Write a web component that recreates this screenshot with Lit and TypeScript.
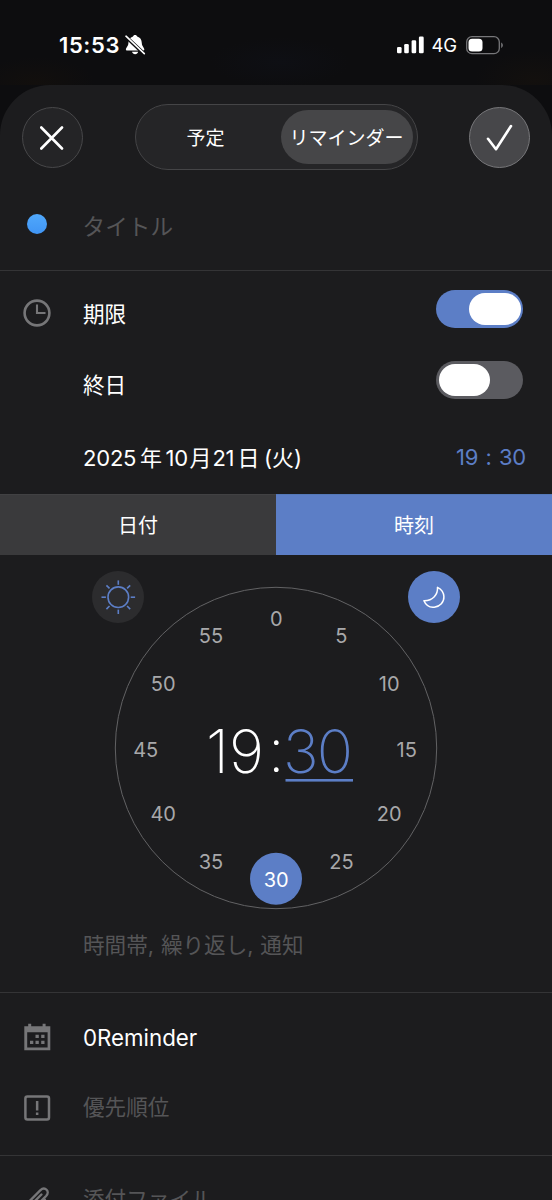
import { LitElement, html, css, svg } from "lit";
import { customElement, property, state } from "lit/decorators.js";
import { classMap } from "lit/directives/class-map.js";

const family = css`Inter, "Noto Sans CJK JP", sans-serif`;

@customElement("toggle-switch")
class ToggleSwitch extends LitElement {
  @property({ type: Boolean }) on = false;
  static styles = css`
    :host { display: block; }
    .track { box-sizing: border-box; width: 86.6px; height: 38.4px; padding: 2.9px 2.5px; border-radius: 19.2px; display: flex; background: #5b5b60; }
    .track.on { background: #5c7ec6; justify-content: flex-end; }
    .knob { width: 51.3px; height: 32.6px; border-radius: 17px; background: #fff; }
  `;
  render() {
    return html`<div class=${classMap({ track: true, on: this.on })} @click=${() => (this.on = !this.on)}><div class="knob"></div></div>`;
  }
}

@customElement("minute-dial")
class MinuteDial extends LitElement {
  @state() minute = 30;
  static styles = css`
    :host { display: block; width: 552px; height: 365px; }
    svg { display: block; }
    text { font-family: ${family}; text-anchor: middle; }
    .num { font-size: 20px; font-weight: 370; fill: #a8a8aa; }
    .num.sel { fill: #fff; }
    .big { font-size: 60px; font-weight: 200; fill: #fff; text-anchor: start; }
    .accent { fill: #5c7ec6; }
  `;
  render() {
    const marks = Array.from({ length: 12 }, (_, i) => {
      const a = (i * Math.PI) / 6;
      return { n: i * 5, x: 276.2 + 130.5 * Math.sin(a), y: 194 - 130.5 * Math.cos(a) };
    });
    const rays = Array.from({ length: 8 }, (_, i) => i * 45);
    return html`<svg width="552" height="365" viewBox="0 0 552 365">
      <circle cx="276" cy="193" r="160.7" fill="none" stroke="#626264" stroke-width="1" />
      <circle cx="118" cy="42" r="26" fill="#2c2c2e" />
      <g stroke="#5c7ec6" stroke-width="1.6" fill="none">
        <circle cx="118.3" cy="42.2" r="10.3" />
        ${rays.map((r) => svg`<path d="M118.3 25.4v4.4" transform="rotate(${r} 118.3 42.2)" />`)}
      </g>
      <circle cx="434" cy="42" r="26" fill="#5c7ec6" />
      <path d="M437.5 32.3C438 39.5 433 46 423.9 45.8C426 50.5 430 52.7 434.3 52.2C440 51.6 444.2 47 443.9 41.6C443.7 37.5 441.4 34.2 437.5 32.3Z" fill="none" stroke="#fff" stroke-width="1.5" stroke-linejoin="round" />
      ${marks.map((m) => svg`
        ${m.n === this.minute ? svg`<circle cx="276" cy=${m.y - 0.7} r="26" fill="#5c7ec6" />` : null}
        <text class=${m.n === this.minute ? "num sel" : "num"} x=${m.x} y=${m.y + (m.n % 30 === 15 ? 8 : 7)} @click=${() => (this.minute = m.n)}>${m.n}</text>`)}
      <text class="big" x="206" y="218" textLength="58" lengthAdjust="spacing">19</text>
      <text class="big" x="268" y="217">:</text>
      <text class="big accent" x="283" y="218" textLength="70" lengthAdjust="spacing">${this.minute}</text>
      <rect class="accent" x="285.5" y="224" width="67.5" height="2.6" />
    </svg>`;
  }
}

@customElement("app-root")
class AppRoot extends LitElement {
  @state() tab = 1;
  static styles = css`
    :host { display: block; height: 1200px; overflow: hidden; background: #0d0d0f; color: #fff; font-family: ${family}; font-size: 21.6px; font-weight: 370; }
    * { box-sizing: border-box; }
    svg { display: block; flex: none; }
    .status { height: 85px; padding: 0 48px 0 59px; display: flex; align-items: center; justify-content: space-between;
      background: radial-gradient(ellipse 60px 25px at 35px 82px, #120f0d, transparent), radial-gradient(ellipse 60px 30px at 535px 80px, #13100e, transparent), radial-gradient(ellipse 70px 25px at 280px 62px, #0e0f14, transparent), #0d0d0f; }
    .left, .right { display: flex; align-items: center; height: 30px; margin-top: 5px; }
    .clock { font-size: 22px; font-weight: 600; letter-spacing: .6px; width: 65.5px; white-space: nowrap; }
    .net { font-size: 18.5px; font-weight: 400; letter-spacing: -.3px; width: 34.5px; margin-left: 7px; }
    .sheet { height: 1115px; overflow: hidden; border-radius: 50px 50px 0 0; background: #1c1c1e; }
    .head { height: 105px; padding: 19px 22px 0; display: flex; justify-content: space-between; }
    .round { width: 61px; height: 61px; margin-top: 3px; border: 1px solid #48484a; border-radius: 50%; background: #242426; display: grid; place-items: center; }
    .close { padding-right: 2px; }
    .round.done { border-color: #77777a; background: #47474a; }
    .seg { width: 283px; height: 66px; padding: 5px 4px 5px 5px; border: 1.3px solid #454547; border-radius: 33px; background: #252527; display: flex; font-size: 19px; }
    .opt { flex: 1; display: grid; place-items: center; padding-bottom: 2px; border-radius: 28px; white-space: nowrap; }
    .opt.plan { padding-right: 10px; }
    .opt.on { flex: 0 0 132px; background: #464648; }
    .row { display: flex; align-items: center; padding-right: 29px; }
    .icon { width: 83px; flex: none; padding-left: 23px; }
    .label { flex: 1; white-space: nowrap; }
    .dim { color: #555557; }
    .title { height: 81px; border-bottom: 1px solid #343436; }
    .dot { width: 20px; height: 20px; border-radius: 50%; margin-left: 4px; background: linear-gradient(#50a8fb, #4095f5); }
    .title .icon { margin-top: -12px; }
    .title .label { font-size: 22.6px; margin: -10px 0 0 -.4px; }
    .limit { height: 84px; }
    .limit .label, .allday .label { margin-top: -2px; }
    .limit toggle-switch, .allday toggle-switch { margin-top: -8.4px; }
    .allday { height: 58px; }
    .date { height: 81px; padding: 5px 26px 0 0; font-size: 22px; }
    .date .label { display: flex; align-items: baseline; margin-top: -1px; }
    .d1 { width: 57px; letter-spacing: -.2px; }
    .d2 { width: 25.5px; }
    .d3 { width: 24px; letter-spacing: -.3px; }
    .d4 { width: 23px; }
    .d5 { width: 25px; letter-spacing: -.3px; }
    .d6 { width: 26.5px; }
    .time { color: #5c7ec6; letter-spacing: -.2px; display: flex; gap: 7.3px; margin-top: 2.4px; }
    .tabs { height: 61px; display: flex; font-size: 20px; }
    .tab { flex: 1; display: grid; place-items: center; padding-bottom: 1px; background: #3a3a3c; border-top: 1px solid #414143; }
    .tab.on { background: #5c7ec6; border-color: #5478b8; }
    .extras { height: 73px; padding-bottom: 26px; border-bottom: 1px solid #343436; }
    .extras .label { word-spacing: .8px; }
    .calendar { height: 88px; }
    .priority { height: 75px; padding-bottom: 20px; border-bottom: 1px solid #343436; }
    .priority .label { margin-top: -5px; }
    .attach { height: 86px; }
    .attach .label { margin-top: -3px; }
    .attach .icon { margin-top: 1px; }
    .bottom { height: 45px; overflow: hidden; }
    .reminder { font-size: 22.3px; }
  `;
  render() {
    return html`
      <div class="status">
        <div class="left"><span class="clock">15:53</span>
          <svg width="21" height="22" viewBox="0 0 21 22"><path d="M10 1C11.2 1 12 1.6 12.2 2.5C15.2 3.4 16.7 5.7 16.8 8.9C16.9 12.5 19.3 13.4 19.3 15.4C19.3 16.1 18.8 16.5 18 16.5H2.2C1.4 16.5 .9 16.1 .9 15.4C.9 13.4 3.3 12.5 3.4 8.9C3.5 5.7 5 3.4 8 2.5C8.2 1.6 8.9 1 10 1ZM7 17.7H13.2C12.8 19.3 11.6 20.2 10.1 20.2S7.4 19.3 7 17.7Z" fill="#fff"/><path d="M0 1.7L19.6 20.4" stroke="#0d0d0f" stroke-width="3.6"/><path d="M1 2.2L19.3 19.6" stroke="#fff" stroke-width="1.6" stroke-linecap="round"/></svg>
        </div>
        <div class="right">
          <svg width="28" height="18" viewBox="0 0 28 18" fill="#fff"><rect x="0" y="11" width="4.6" height="6.3" rx="1.3"/><rect x="7.2" y="8" width="4.6" height="9.3" rx="1.3"/><rect x="14.6" y="4.3" width="4.6" height="13" rx="1.3"/><rect x="21.9" y=".5" width="4.8" height="16.8" rx="1.3"/></svg>
          <span class="net">4G</span>
          <svg width="38" height="19" viewBox="0 0 38 19"><rect x=".7" y=".7" width="32.6" height="17" rx="5.3" fill="none" stroke="#77777a" stroke-width="1.3"/><rect x="2.5" y="2.8" width="14" height="12.8" rx="3.6" fill="#fff"/><path d="M35.2 6.5C37.4 7.5 37.4 11 35.2 12Z" fill="#77777a"/></svg>
        </div>
      </div>
      <div class="sheet">
        <div class="head">
          <div class="round close"><svg width="24" height="24" viewBox="0 0 24 24" stroke="#fff" stroke-width="2.6" stroke-linecap="round"><path d="M1.3 1.5L22 22.5M22 1.5L1.3 22.5"/></svg></div>
          <div class="seg"><div class="opt plan">予定</div><div class="opt on">リマインダー</div></div>
          <div class="round done"><svg width="27" height="27" viewBox="0 0 27 27" fill="none" stroke="#fff" stroke-width="2.6" stroke-linecap="round" stroke-linejoin="round"><path d="M2 14.8L10 25.2L25 2"/></svg></div>
        </div>
        <div class="row title"><div class="icon"><div class="dot"></div></div><div class="label dim">タイトル</div></div>
        <div class="row limit"><div class="icon"><svg width="28" height="28" viewBox="0 0 28 28" fill="none" stroke="#767678"><circle cx="14" cy="14" r="12.4" stroke-width="2.6"/><path d="M14 5.5V14H22.5" stroke-width="2.1"/></svg></div><div class="label">期限</div><toggle-switch on></toggle-switch></div>
        <div class="row allday"><div class="icon"></div><div class="label">終日</div><toggle-switch></toggle-switch></div>
        <div class="row date"><div class="icon"></div>
          <div class="label"><span class="d1">2025</span><span class="d2">年</span><span class="d3">10</span><span class="d4">月</span><span class="d5">21</span><span class="d6">日</span><span>(火)</span></div>
          <div class="time"><span>19</span><span>:</span><span>30</span></div></div>
        <div class="tabs">${["日付", "時刻"].map((t, i) => html`<div class=${classMap({ tab: true, on: this.tab === i })} @click=${() => (this.tab = i)}>${t}</div>`)}</div>
        <minute-dial></minute-dial>
        <div class="row extras"><div class="icon"></div><div class="label dim">時間帯, 繰り返し, 通知</div></div>
        <div class="row calendar"><div class="icon"><svg width="28" height="28" viewBox="0 0 28 28" fill="#767678"><path fill-rule="evenodd" d="M1.3 3.3H5.2V.8H8.2V3.3H19.6V.8H22.6V3.3H27.3V27.3H1.3ZM4.2 9.2V24.6H24.6V9.2Z"/><path d="M12.5 11.8h3.3v3.3h-3.3zM18.2 11.8h3.3v3.3h-3.3zM7 17.8h3.3v3.3H7zM12.5 17.8h3.3v3.3h-3.3zM18.2 17.8h3.3v3.3h-3.3z"/></svg></div><div class="label reminder">0Reminder</div></div>
        <div class="row priority"><div class="icon"><svg width="28" height="28" viewBox="0 0 28 28"><rect x="2.4" y="2.4" width="23.6" height="23.2" rx="2" fill="none" stroke="#767678" stroke-width="2.5"/><path d="M12.9 7h2.5v9.6h-2.5zM12.9 18.6h2.5v2.5h-2.5z" fill="#767678"/></svg></div><div class="label dim">優先順位</div></div>
        <div class="bottom"><div class="row attach"><div class="icon"><svg width="28" height="28" viewBox="0 0 28 28" fill="none" stroke="#767678" stroke-width="2.4" stroke-linecap="round"><path d="M21.8 13.5L12.2 23.4C5.8 29.5-.7 22.6 5.2 16.5L17.2 4.4C21.9-.1 27.5 5.3 23.1 10L11.8 21.4C8.9 23.9 6.2 21.2 8.7 18.3L18.4 8.5"/></svg></div><div class="label dim">添付ファイル</div></div></div>
      </div>`;
  }
}
